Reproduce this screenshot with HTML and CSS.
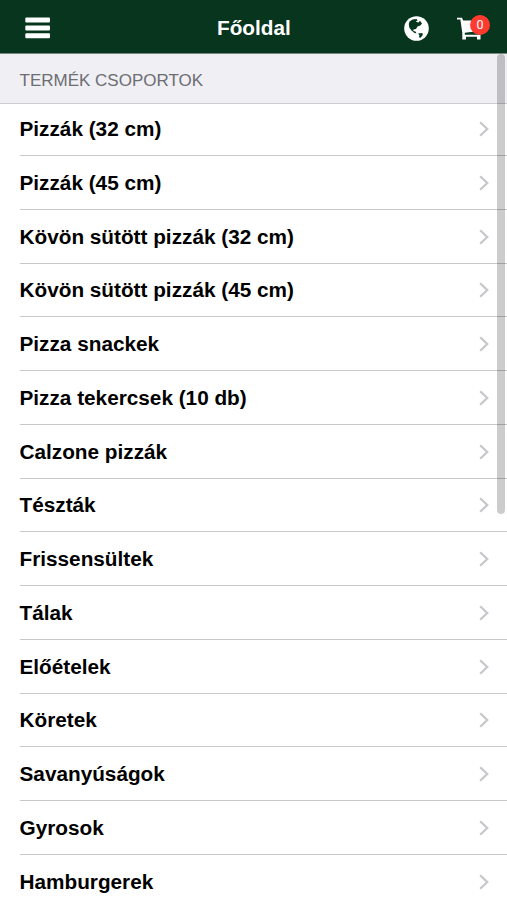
FILE: index.html
```html
<!DOCTYPE html>
<html lang="hu">
<head>
<meta charset="utf-8">
<title>Főoldal</title>
<link rel="stylesheet" href="styles.css">
</head>
<body>
<header class="bar">
  <svg class="menu" viewBox="0 0 25 22"><g fill="#fff"><rect x="0.3" y="0.5" width="24.700" height="5" rx="1"/><rect x="0.3" y="8.4" width="24.700" height="5" rx="1"/><rect x="0.3" y="16.3" width="24.700" height="5" rx="1"/></g></svg>
  <h1 class="title">Főoldal</h1>
  <svg class="globe" viewBox="0 0 25 25"><circle cx="12.5" cy="12.5" r="12.3" fill="#fff"/><path fill="#07351d" d="M5.500 5.500 8.500 3.500 12.500 3 13.500 4.500 11.800 5.800 14.500 6.500 16 4.800 18 7.500 16.300 9.500 13.500 10.500 12 13 9.500 13.500 9.300 15 11.500 15.500 12.500 17.200 10.500 17 7.500 14.500 5.300 11.500 4.800 8ZM14 17.500 18.300 17 18.800 19 16.500 21.700 14.800 21.300 15.500 19.500Z"/></svg>
  <div class="cart">
    <svg class="cart-icon" viewBox="0 0 25 24"><path fill="#fff" d="M0 .8h5L6.200 3.500H24v10.300L7.800 15.700v2H23.500V22.500H20V19.700H9V22.500H5.300V16L3.400 2.500H0Z"/></svg>
    <span class="badge">0</span>
  </div>
</header>
<main>
  <h2 class="group">TERMÉK CSOPORTOK</h2>
  <ul class="list"></ul>
</main>
<div class="scrollbar"></div>
<script src="app.js"></script>
</body>
</html>
```
FILE: styles.css
```css
* { box-sizing: border-box; }
body { margin: 0; height: 900px; overflow: hidden; background: #fff; color: #000; font-family: "Liberation Sans", Arial, sans-serif; }
.bar { display: flex; align-items: center; height: 54px; padding: 0 17px 0 25px; background: #07351d; border-bottom: 1px solid #78877f; }
.menu { width: 25px; height: 22px; margin-top: 2px; }
.title { flex: 1; margin: 3px 0 0 12px; padding-left: 155px; color: #fff; font-size: 20.75px; line-height: 24px; font-weight: bold; }
.globe { width: 25px; height: 25px; margin: 3px 28px 0 0; }
.cart { position: relative; width: 33px; height: 24px; margin-top: 4px; }
.cart-icon { display: block; width: 25px; height: 24px; }
.badge { position: absolute; left: 13px; top: -2px; width: 20px; height: 20px; border-radius: 50%; background: #ff3b30; color: #fff; font: 12.5px/20px Roboto, sans-serif; text-align: center; }
.group { height: 50px; margin: 0; padding: 2px 19.5px 0; background: #efeff4; border-bottom: 1px solid #cbcbd0; color: #6d6d72; font-size: 17px; line-height: 50px; font-weight: normal; }
.list { margin: 0; padding: 0; list-style: none; }
.row { display: flex; align-items: center; justify-content: space-between; height: 53.75px; margin-left: 19.5px; padding: 1px 18.5px 0 0; border-bottom: 1px solid #c8c7cc; font-size: 20.75px; font-weight: bold; }
.row:first-child { height: 52px; padding-bottom: 1px; padding-top: 0; }
.chevron { width: 10px; height: 16px; fill: none; stroke: #c7c7cc; stroke-width: 2.3; }
.scrollbar { position: absolute; left: 497px; top: 54px; width: 8px; height: 460px; border-radius: 4px; background: rgba(0, 0, 0, .2); }
```
FILE: app.js
```js
const groups = [
  "Pizzák (32 cm)", "Pizzák (45 cm)", "Kövön sütött pizzák (32 cm)",
  "Kövön sütött pizzák (45 cm)", "Pizza snackek", "Pizza tekercsek (10 db)",
  "Calzone pizzák", "Tészták", "Frissensültek", "Tálak", "Előételek",
  "Köretek", "Savanyúságok", "Gyrosok", "Hamburgerek"
];
document.querySelector(".list").innerHTML = groups.map(name =>
  `<li class="row"><span>${name}</span><svg class="chevron" viewBox="0 0 10 16"><path d="M1.200 1.200 8.200 8l-7 6.800"/></svg></li>`
).join("");
```
